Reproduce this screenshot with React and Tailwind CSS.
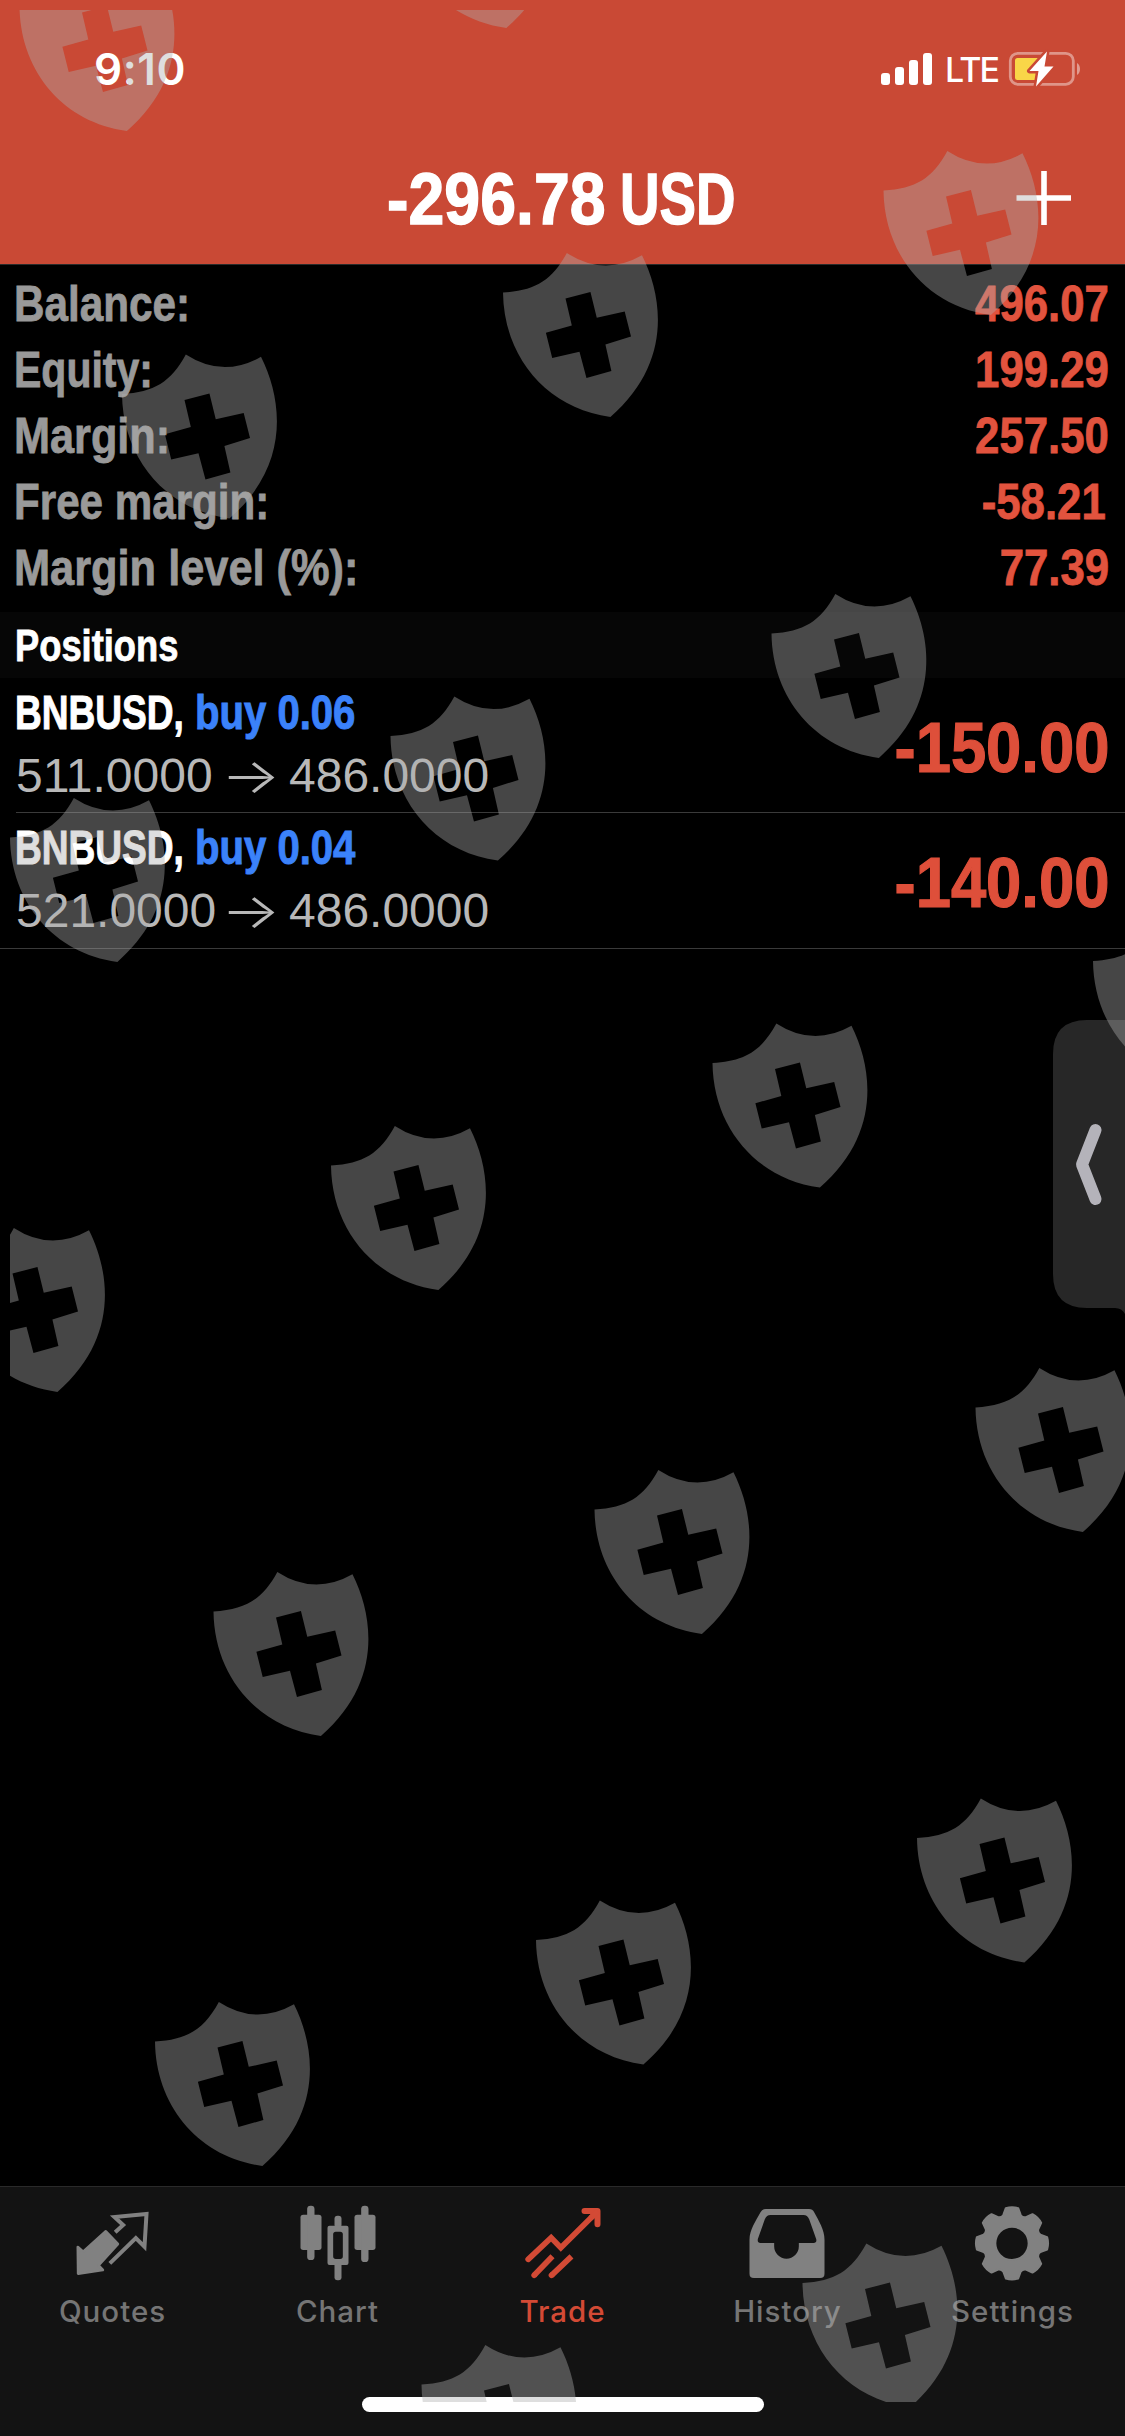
import clsx from 'clsx'

const summary = [
  { label: 'Balance:', value: '496.07', labelClass: 'scale-x-[.845]' },
  { label: 'Equity:', value: '199.29', labelClass: 'scale-x-[.82]' },
  { label: 'Margin:', value: '257.50', labelClass: 'scale-x-[.865]' },
  { label: 'Free margin:', value: '-58.21', labelClass: 'scale-x-[.843]', valueClass: '-translate-x-[3px]' },
  { label: 'Margin level (%):', value: '77.39', labelClass: 'scale-x-[.867]' },
]

const positions = [
  { symbol: 'BNBUSD,', side: 'buy 0.06', open: '511.0000', current: '486.0000', profit: '-150.00' },
  { symbol: 'BNBUSD,', side: 'buy 0.04', open: '521.0000', current: '486.0000', profit: '-140.00' },
]

// top left corner of every shield in the overlay
const shields = [
  [19.5, -33], [399, -136],
  [122, 354.5], [503, 253], [883.5, 151],
  [10, 798], [390.5, 696.5], [771.5, 594],
  [1093, 921.5], [712.5, 1023.5], [331, 1126], [-50, 1228],
  [975.5, 1368], [594.5, 1470], [213.5, 1572],
  [917, 1798.5], [536, 1900.5], [155, 2002],
  [802.5, 2243.5], [421.5, 2345],
]

function ShieldOverlay() {
  return (
    <svg
      className="absolute inset-0 pointer-events-none"
      width="1125"
      height="2436"
      viewBox="0 0 1125 2436"
      aria-hidden="true"
    >
      <defs>
        <clipPath id="safe">
          <rect x="10" y="10" width="1115" height="2392" />
        </clipPath>
        <path
          id="shield"
          fillRule="evenodd"
          d="M192 0Q303 72 418 7C486 143 503 338 323 493C132 468 2 313 0 119C97 113 147 83 192 0ZM188 137L207 218L129 240L148 316L230 297L251 376L326 355L308 275L385 251L366 176L282 195L263 117Z"
        />
      </defs>
      <g clipPath="url(#safe)" fill="#adadad" fillOpacity=".404">
        {shields.map(([x, y]) => (
          <use key={`${x},${y}`} href="#shield" transform={`translate(${x} ${y}) scale(.3325)`} />
        ))}
      </g>
    </svg>
  )
}

function StatusBar() {
  return (
    <div className="h-[138px] flex items-center justify-between pl-[94px] pr-[43px] text-white font-['Inter',sans-serif]">
      <span className="text-[44px] leading-none font-semibold tracking-[.6px]">9:10</span>
      <div className="flex items-center">
        <svg width="52" height="34" viewBox="0 0 52 34" fill="white">
          <rect x="0" y="21" width="9" height="12" rx="3" />
          <rect x="14" y="15" width="9" height="18" rx="3" />
          <rect x="28" y="8" width="9" height="25" rx="3" />
          <rect x="42" y="1" width="9" height="32" rx="3" />
        </svg>
        <span className="ml-[12px] w-[53px] mt-[2px] text-[34px] leading-none font-medium tracking-[-1.8px] whitespace-nowrap">LTE</span>
        <svg className="ml-[10px]" width="74" height="40" viewBox="0 0 74 40">
          <rect x="2.3" y="4.3" width="63" height="31" rx="7.5" fill="none" stroke="white" strokeOpacity=".42" strokeWidth="2.8" />
          <path d="M69 14c4 2 4 10 0 12Z" fill="white" fillOpacity=".45" />
          <rect x="7" y="9" width="25" height="22" rx="2.5" fill="#f9d648" />
          <path
            d="M39 2.5L21.5 22H30.5L28 37.5L45.500 17.500H36.500Z"
            fill="white"
            stroke="#c94935"
            strokeWidth="5"
            strokeLinejoin="round"
            paintOrder="stroke"
          />
        </svg>
      </div>
    </div>
  )
}

function Header() {
  return (
    <header className="bg-[#c94935] border-b border-[#2b2b2b]">
      <StatusBar />
      <div className="h-[126px] flex items-center justify-between pb-1 pl-[387px] pr-[53px]">
        <h1 className="flex text-[72px] leading-none font-bold text-white whitespace-nowrap [-webkit-text-stroke:1.4px_white]">
          <span className="w-[233px] origin-left scale-x-[.895]">-296.78</span>
          <span className="origin-left scale-x-[.76]">USD</span>
        </h1>
        <svg width="56" height="56" viewBox="0 0 56 56" stroke="white" strokeWidth="5.6">
          <path d="M0.500 27H55M28 0V54" />
        </svg>
      </div>
    </header>
  )
}

function Position({ position, last }) {
  return (
    <div className={clsx('relative flex justify-between pl-4 pr-4', last ? 'h-[136px]' : 'h-[135px]')}>
      <div className="pt-[3px] text-5xl">
        <div className="flex h-[63px] items-center leading-none font-bold whitespace-nowrap">
          <span className="w-[179px] origin-left scale-x-[.772] -translate-x-px text-white [-webkit-text-stroke:1px_white]">
            {position.symbol}
          </span>
          <span className="origin-left scale-x-[.835] text-[#3b82fa] [-webkit-text-stroke:1px_#3b82fa]">
            {position.side}
          </span>
        </div>
        <div className="flex h-[63px] items-center leading-none text-[#b8b8b8] whitespace-nowrap">
          <span className="w-[205px]">{position.open}</span>
          <span className="w-[68px] origin-left scale-x-[1.3] font-['Inter',sans-serif] font-light">→</span>
          <span>{position.current}</span>
        </div>
      </div>
      <span className="self-center pt-1 origin-right scale-x-[.905] text-[70px] leading-none font-bold text-[#de4f3a] [-webkit-text-stroke:1.2px_#de4f3a]">
        {position.profit}
      </span>
      <div className={clsx('absolute bottom-0 right-0 h-px bg-[#3a3a3a]', last ? 'left-0' : 'left-4')} />
    </div>
  )
}

function QuotesIcon() {
  return (
    <svg width="90" height="90" viewBox="22.5 0 270 270" fill="none" stroke="currentColor">
      <path d="M52 156L68 170L136 109L172 147L114 211L127 225L53 236Z" fill="currentColor" strokeWidth="8" strokeLinejoin="round" />
      <path d="M164 112L188 90L162 66L258 57L252 155L226 129L148 205" strokeWidth="12" />
    </svg>
  )
}

function ChartIcon() {
  return (
    <svg width="90" height="90" viewBox="697.5 0 270 270" fill="currentColor">
      <rect x="720" y="59" width="63" height="106" rx="8" />
      <rect x="740" y="32" width="22" height="163" rx="10" />
      <rect x="882" y="59" width="63" height="106" rx="8" />
      <rect x="902" y="32" width="22" height="169" rx="10" />
      <rect x="822" y="62" width="21" height="36" rx="9" />
      <rect x="822" y="200" width="21" height="56" rx="9" />
      <path
        fillRule="evenodd"
        d="M807 92H858Q864 92 864 98V204Q864 210 858 210H807Q801 210 801 204V98Q801 92 807 92ZM826 110Q818 110 818 118V184Q818 192 826 192H839Q847 192 847 184V118Q847 110 839 110Z"
      />
    </svg>
  )
}

function TradeIcon() {
  return (
    <svg width="90" height="90" viewBox="22.5 0 270 270" fill="none" stroke="currentColor" strokeWidth="17">
      <path d="M53 193L122 128L151 158L256 54" strokeLinecap="round" />
      <path d="M222 48H261V88" strokeLinecap="round" strokeLinejoin="round" strokeWidth="18" />
      <path d="M262 48L240 70" />
      <path d="M71 241L126 184M123 241L183 184" />
      <path d="M71 241L72 240M123 241L124 240" strokeLinecap="round" />
    </svg>
  )
}

function HistoryIcon() {
  return (
    <svg width="90" height="90" viewBox="697.5 0 270 270" fill="currentColor">
      <path
        fillRule="evenodd"
        d="M766 42H896Q906 42 911 52C925 78 942 105 942 134V236Q942 249 929 249H730Q717 249 717 236V134C717 105 736 78 750 52Q756 42 766 42ZM780 60Q768 60 763 73L742 132Q740 144 750 144H791V154A37 37 0 0 0 865 154V144H909Q920 144 917 132L896 73Q891 60 879 60Z"
      />
    </svg>
  )
}

function SettingsIcon() {
  // eight teeth, each given by its tip and the valley after it
  const point = (deg, r) => {
    const a = ((deg - 90) * Math.PI) / 180
    return `${(132 + r * Math.cos(a)).toFixed(1)} ${(145 + r * Math.sin(a)).toFixed(1)}`
  }
  const outline = Array.from({ length: 8 }, (_, i) => {
    const c = i * 45
    return `${point(c - 17, 89)} L${point(c - 10, 107)} Q${point(c, 111)} ${point(c + 10, 107)} L${point(c + 17, 89)} Q${point(c + 22.5, 83)} `
  }).join('')
  return (
    <svg width="90" height="90" viewBox="0 0 270 270" fill="currentColor">
      <path
        fillRule="evenodd"
        stroke="currentColor"
        strokeWidth="6"
        strokeLinejoin="round"
        d={`M${outline}${point(-17, 89)}ZM132 95A50 50 0 1 0 132 195A50 50 0 1 0 132 95Z`}
      />
    </svg>
  )
}

const tabs = [
  { label: 'Quotes', Icon: QuotesIcon },
  { label: 'Chart', Icon: ChartIcon },
  { label: 'Trade', Icon: TradeIcon, active: true },
  { label: 'History', Icon: HistoryIcon },
  { label: 'Settings', Icon: SettingsIcon },
]

function TabBar() {
  return (
    <nav className="h-[250px] bg-[#131313] border-t border-[#2a2a2a] flex flex-col justify-between">
      <div className="grid grid-cols-5 pt-2">
        {tabs.map(({ label, Icon, active }) => (
          <div
            key={label}
            className={clsx('flex flex-col items-center', active ? 'text-[#d34a35]' : 'text-[#818181]')}
          >
            <Icon />
            <span
              className={clsx(
                "mt-1.5 text-[29.5px] leading-10 font-[450] tracking-[1px] font-['Inter',sans-serif]",
                !active && 'text-[#757575]'
              )}
            >
              {label}
            </span>
          </div>
        ))}
      </div>
      {/* home indicator */}
      <div className="mx-auto mb-6 h-[15px] w-[402px] rounded-full bg-white" />
    </nav>
  )
}

export default function App() {
  return (
    <div className="relative w-[1125px] h-[2436px] overflow-hidden bg-black flex flex-col font-['Liberation_Sans',Arial,sans-serif]">
      <Header />

      {/* Account summary */}
      <section className="h-[347px] pt-1.5 pl-[14px] pr-4 text-[50px] font-bold">
        {summary.map(row => (
          <div key={row.label} className="flex h-[66px] items-center justify-between leading-none whitespace-nowrap">
            <span className={clsx('origin-left text-[#999999] [-webkit-text-stroke:.8px_#999999]', row.labelClass)}>
              {row.label}
            </span>
            <span
              className={clsx(
                'origin-right scale-x-[.875] text-[#e2533e] [-webkit-text-stroke:.8px_#e2533e]',
                row.valueClass
              )}
            >
              {row.value}
            </span>
          </div>
        ))}
      </section>

      <h2 className="h-[66px] pt-0.5 pl-[15px] flex items-center bg-[#060606] text-[44px] leading-none font-bold text-white">
        <span className="origin-left scale-x-[.825] [-webkit-text-stroke:.8px_white]">Positions</span>
      </h2>

      <main className="flex-1">
        {positions.map((position, i) => (
          <Position key={position.side} position={position} last={i === positions.length - 1} />
        ))}
      </main>

      <TabBar />

      {/* Side panel handle */}
      <svg className="absolute right-0 top-[1020px]" width="72" height="294" viewBox="0 0 72 294">
        <path d="M72 0H34Q0 0 0 34V254Q0 288 34 288H62Q69 288 72 294Z" fill="#272727" />
        <path
          d="M42.500 110L29 144.500L42.500 179"
          fill="none"
          stroke="#b4b3ba"
          strokeWidth="12"
          strokeLinecap="round"
          strokeLinejoin="round"
        />
      </svg>

      <ShieldOverlay />
    </div>
  )
}
